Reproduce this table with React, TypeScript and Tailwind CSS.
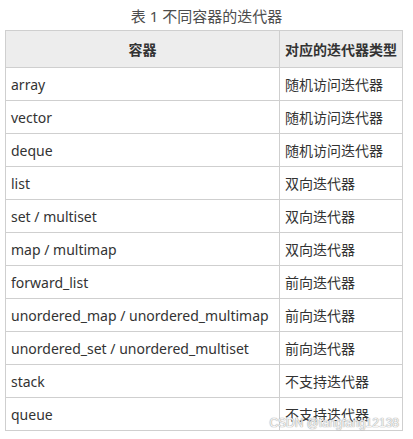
const rows: [string, string][] = [
  ['array', '随机访问迭代器'],
  ['vector', '随机访问迭代器'],
  ['deque', '随机访问迭代器'],
  ['list', '双向迭代器'],
  ['set / multiset', '双向迭代器'],
  ['map / multimap', '双向迭代器'],
  ['forward_list', '前向迭代器'],
  ['unordered_map / unordered_multimap', '前向迭代器'],
  ['unordered_set / unordered_multiset', '前向迭代器'],
  ['stack', '不支持迭代器'],
  ['queue', '不支持迭代器'],
]

export default function App() {
  return (
    <div
      className="relative w-[413px] h-[439px] bg-white text-[#333] overflow-hidden"
      style={{ fontFamily: '"Noto Sans", "Noto Sans CJK SC", sans-serif' }}
    >
      <div className="h-[30px] pt-[6px] text-center text-[15px] leading-[20px] text-[#4d4d4d]">
        表 1 不同容器的迭代器
      </div>
      <table className="ml-[5px] w-[398px] border-collapse text-[14px]">
        <thead>
          <tr className="h-[37px] bg-[#ededed]">
            <th className="w-[274px] border border-[#cfcfcf] font-bold text-center">容器</th>
            <th className="border border-[#cfcfcf] font-bold text-left pl-[5px]">对应的迭代器类型</th>
          </tr>
        </thead>
        <tbody>
          {rows.map(([name, kind]) => (
            <tr key={name} className="h-[33px]">
              <td className="border border-[#cfcfcf] pl-[5px]">{name}</td>
              <td className="border border-[#cfcfcf] pl-[5px]">{kind}</td>
            </tr>
          ))}
        </tbody>
      </table>
      {/* watermark */}
      <div
        className="absolute right-[14px] top-[416px] text-[12px] leading-[14px] text-white/90"
        style={{
          fontFamily: '"Liberation Sans", sans-serif',
          textShadow: '0 0 1px #999, 0 0 1px #999',
        }}
      >
        CSDN @fangfang12138
      </div>
    </div>
  )
}
